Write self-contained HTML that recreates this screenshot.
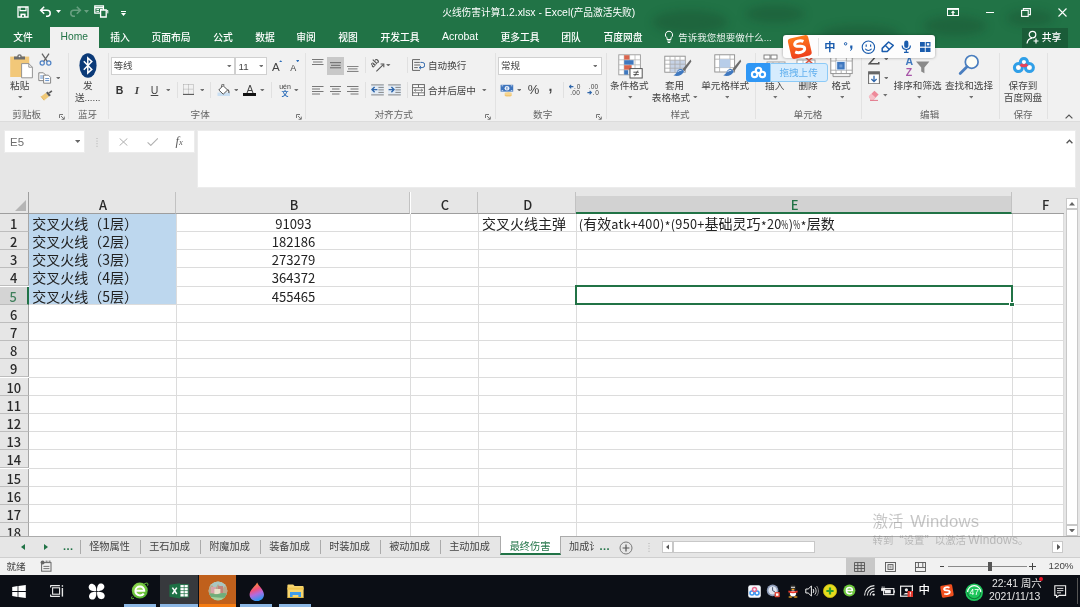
<!DOCTYPE html>
<html lang="zh-CN">
<head>
<meta charset="utf-8">
<title>火线伤害计算1.2.xlsx - Excel</title>
<style>
*{box-sizing:border-box;margin:0;padding:0}
html,body{width:1080px;height:607px;overflow:hidden;background:#e6e6e6}
body{position:relative;will-change:transform;font-family:"Liberation Sans","Noto Sans CJK SC",sans-serif;font-size:10.5px;color:#444}
.abs{position:absolute}
svg.abs{z-index:2}
#titlebar{position:absolute;left:0;top:0;width:1080px;height:47.5px;background:#217346}
#title{position:absolute;left:0;width:1077.5px;top:6px;text-align:center;color:#fff;font-size:9.7px;line-height:14px}
.mtab{position:absolute;top:29.5px;color:#fff;font-weight:500;font-size:9.8px;line-height:15px;white-space:nowrap;transform:translateX(-50%)}
.tl{font-size:10.4px}
#hometab{position:absolute;left:50px;top:27px;width:48.5px;height:21px;background:#f1f1f1;color:#217346;text-align:center;font-size:10.3px;line-height:20px}
#ribbon{position:absolute;left:0;top:47.5px;width:1080px;height:74.5px;background:#f1f1f1;border-bottom:1px solid #dcdcdc}
.rt{position:absolute;white-space:nowrap;font-size:9.6px;line-height:14px;color:#444}
.rc{transform:translateX(-50%);text-align:center}
.gl{position:absolute;top:53px;width:1px;height:66px;background:#e2e2e2}
.glabel{position:absolute;top:107.9px;font-size:9.6px;line-height:14px;color:#666;transform:translateX(-50%);white-space:nowrap}
#fbar{position:absolute;left:0;top:122.5px;width:1080px;height:73px;background:#e6e6e6}
.wbox{position:absolute;background:#fff;border:1px solid #d0d0d0}
#grid{position:absolute;left:0;top:192px;width:1063.5px;height:344px;background:#fff;overflow:hidden}
.ch{position:absolute;top:0;background:#e6e6e6;text-align:center;font-family:"Noto Sans CJK SC",sans-serif;font-weight:500;font-size:12.9px;line-height:17.4px;color:#2a2a2a;border-right:1px solid #c2c2c2;border-bottom:1px solid #9e9e9e;padding-left:2px;padding-top:3.5px}
.rh{position:absolute;left:0;width:28.5px;height:18.2px;background:#e6e6e6;text-align:center;font-family:"Noto Sans CJK SC",sans-serif;font-weight:500;font-size:12.9px;line-height:19.2px;color:#2a2a2a;border-bottom:1px solid #bdbdbd;border-right:1px solid #a6a6a6;overflow:hidden}
.vl{position:absolute;top:21.7px;width:1px;height:330px;background:#dcdcdc}
.hl{position:absolute;left:28.5px;width:1040px;height:1px;background:#dcdcdc}
.num{font-size:13.1px !important;line-height:20.2px !important}
#fx s{text-decoration:none;font-size:12.7px;letter-spacing:0.24px}
#fx i{font-style:normal;font-size:12px;position:relative;top:2.6px;margin:0 0.4px}
#fx u{text-decoration:none;display:inline-block;font-size:12.4px;transform:scaleX(0.6);margin:0 -2.1px}
.cell{position:absolute;height:18.2px;line-height:18.6px;font-size:14px;color:#222;white-space:nowrap;font-family:"Noto Sans CJK SC","Liberation Sans",sans-serif;font-weight:400;overflow:visible}
#tabs{position:absolute;left:0;top:535.7px;width:1080px;height:22.6px;background:#e6e6e6;border-top:1px solid #ababab;border-bottom:1px solid #cfcfcf}
.st{position:absolute;top:0;height:21px;font-size:10.2px;line-height:19px;color:#444;white-space:nowrap;transform:translateX(-50%)}
.sd{position:absolute;top:3px;width:1px;height:14px;background:#ababab}
#status{position:absolute;left:0;top:558.3px;width:1080px;height:17.5px;background:#f1f1f1}
#taskbar{position:absolute;left:0;top:575.4px;width:1080px;height:31.6px;background:#0b0e15}
</style>
</head>
<body>
<div id="titlebar"></div>
<svg class="abs" style="left:560px;top:0;z-index:0" width="520" height="47" viewBox="0 0 520 47"><defs><filter id="bl" x="-20%" y="-50%" width="140%" height="200%"><feGaussianBlur stdDeviation="5"/></filter></defs><g filter="url(#bl)" fill="#123f27" opacity="0.28"><ellipse cx="130" cy="22" rx="38" ry="12"/><ellipse cx="215" cy="14" rx="30" ry="9"/><ellipse cx="300" cy="34" rx="40" ry="9"/><ellipse cx="395" cy="26" rx="32" ry="10"/><ellipse cx="470" cy="18" rx="24" ry="8"/></g></svg>
<div id="title">火线伤害计算<span class="tl">1.2.xlsx - Excel(</span>产品激活失败<span class="tl">)</span></div>
<div class="mtab" style="left:23px">文件</div>
<div class="mtab" style="left:120px">插入</div>
<div class="mtab" style="left:171px">页面布局</div>
<div class="mtab" style="left:223px">公式</div>
<div class="mtab" style="left:265px">数据</div>
<div class="mtab" style="left:306px">审阅</div>
<div class="mtab" style="left:348px">视图</div>
<div class="mtab" style="left:400px">开发工具</div>
<div class="mtab" style="left:460px;font-size:10.5px;top:29px">Acrobat</div>
<div class="mtab" style="left:520px">更多工具</div>
<div class="mtab" style="left:571px">团队</div>
<div class="mtab" style="left:623px">百度网盘</div>
<div class="mtab" style="transform:none;left:678.3px;color:rgba(255,255,255,0.9);font-size:9.5px;font-weight:400">告诉我您想要做什么...</div>
<svg class="abs" style="left:663px;top:30px" width="12" height="14" viewBox="0 0 12 14"><path d="M6 1.2a3.6 3.6 0 0 0-2 6.6v1.7h4V7.8a3.6 3.6 0 0 0-2-6.6z" fill="none" stroke="#fff" stroke-width="1"/><path d="M4.3 11h3.4M4.8 12.5h2.4" stroke="#fff" stroke-width="1"/></svg>
<div class="abs" style="left:1021.5px;top:28px;width:46px;height:19.5px;background:#1a5c38"></div>
<svg class="abs" style="left:1026px;top:30px" width="14" height="15" viewBox="0 0 14 15"><circle cx="6.5" cy="4.6" r="3.3" fill="none" stroke="#fff" stroke-width="1.2"/><path d="M1 13.5c0.4-3 2.4-5 5-5.4" fill="none" stroke="#fff" stroke-width="1.2"/><path d="M10 8.5v5M7.5 11h5" stroke="#fff" stroke-width="1.2"/></svg>
<div class="mtab" style="left:1051.5px">共享</div>
<svg class="abs" style="left:17px;top:5.5px" width="12" height="12" viewBox="0 0 12 12"><path d="M1 1h10v10H1z" fill="none" stroke="#fff" stroke-width="1.3"/><path d="M3 1v3.6h6V1" fill="none" stroke="#fff" stroke-width="1.2"/><rect x="3.4" y="7.6" width="5.2" height="3.4" fill="#fff"/><rect x="5.2" y="9" width="1.6" height="2" fill="#217346"/></svg>
<svg class="abs" style="left:39px;top:6px" width="14" height="11" viewBox="0 0 14 11"><path d="M5.2 0.8 1.6 4.3l3.6 3.5M1.8 4.3h6.4a3 3 0 0 1 0 6H7" fill="none" stroke="#fff" stroke-width="1.5"/></svg>
<svg class="abs" style="left:55.5px;top:10px" width="5" height="3" viewBox="0 0 5 3"><path d="M0 0h5L2.5 3z" fill="#fff"/></svg>
<svg class="abs" style="left:68px;top:6px" width="14" height="11" viewBox="0 0 14 11" opacity="0.32"><path d="M8.8 0.8l3.6 3.5-3.6 3.5M12.2 4.3H5.8a3 3 0 0 0 0 6H7" fill="none" stroke="#fff" stroke-width="1.5"/></svg>
<svg class="abs" style="left:83.5px;top:10px" width="5" height="3" viewBox="0 0 5 3" opacity="0.32"><path d="M0 0h5L2.5 3z" fill="#fff"/></svg>
<svg class="abs" style="left:94px;top:5px" width="15" height="13" viewBox="0 0 15 13"><path d="M0.8 0.8h8.6v7.4H0.8z" fill="none" stroke="#fff" stroke-width="1.3"/><path d="M0.8 2.6h8.6" stroke="#fff" stroke-width="1.6"/><path d="M2.4 4.6h2.6M2.4 6.4h2.6M6 4.6h2" stroke="#fff" stroke-width="1"/><path d="M6.6 5h5.6v7H6.6z" fill="#217346" stroke="#fff" stroke-width="1.3"/><path d="M12.2 6.2l1.6-0.8v3" fill="none" stroke="#fff" stroke-width="1"/></svg>
<svg class="abs" style="left:121px;top:10.5px" width="5" height="5" viewBox="0 0 5 5"><path d="M0 0.5h5" stroke="#fff" stroke-width="1"/><path d="M0 2h5L2.5 5z" fill="#fff"/></svg>
<svg class="abs" style="left:946.5px;top:8px" width="12" height="8" viewBox="0 0 12 8"><rect x="0.5" y="0.5" width="11" height="7" fill="none" stroke="#fff" stroke-width="1"/><path d="M0.5 1.2h11" stroke="#fff" stroke-width="1.4"/><path d="M6 2.4 3.8 4.8h1.5V7h1.4V4.8h1.5z" fill="#fff"/></svg>
<div class="abs" style="left:985.5px;top:11.5px;width:8px;height:1.2px;background:#fff"></div>
<svg class="abs" style="left:1021px;top:7.5px" width="10" height="9" viewBox="0 0 10 9"><rect x="0.6" y="2.4" width="6.6" height="6" fill="none" stroke="#fff" stroke-width="1.1"/><path d="M2.4 2.4V0.6h7v6H7.4" fill="none" stroke="#fff" stroke-width="1.1"/></svg>
<svg class="abs" style="left:1057.5px;top:7.5px" width="9" height="9" viewBox="0 0 9 9"><path d="M0.5 0.5l8 8M8.5 0.5l-8 8" stroke="#fff" stroke-width="1.1"/></svg>
<div id="hometab">Home</div>
<div id="ribbon"></div>
<div class="gl" style="left:68px"></div>
<div class="gl" style="left:107.5px"></div>
<div class="gl" style="left:305.3px"></div>
<div class="gl" style="left:494.5px"></div>
<div class="gl" style="left:606px"></div>
<div class="gl" style="left:755px"></div>
<div class="gl" style="left:861.3px"></div>
<div class="gl" style="left:999px"></div>
<div class="gl" style="left:1047.4px"></div>
<div class="abs" style="left:176.5px;top:82px;width:1px;height:16px;background:#e0e0e0"></div>
<div class="abs" style="left:210px;top:82px;width:1px;height:16px;background:#e0e0e0"></div>
<div class="abs" style="left:271px;top:82px;width:1px;height:16px;background:#e0e0e0"></div>
<div class="abs" style="left:365px;top:57px;width:1px;height:16px;background:#e0e0e0"></div>
<div class="abs" style="left:365px;top:82px;width:1px;height:16px;background:#e0e0e0"></div>
<div class="abs" style="left:406.5px;top:57px;width:1px;height:16px;background:#e0e0e0"></div>
<div class="abs" style="left:406.5px;top:82px;width:1px;height:16px;background:#e0e0e0"></div>
<div class="abs" style="left:563px;top:82px;width:1px;height:16px;background:#e0e0e0"></div>
<div class="glabel" style="left:26.7px">剪贴板</div>
<div class="glabel" style="left:87.5px">蓝牙</div>
<div class="glabel" style="left:200.2px">字体</div>
<div class="glabel" style="left:393.7px">对齐方式</div>
<div class="glabel" style="left:542.7px">数字</div>
<div class="glabel" style="left:680px">样式</div>
<div class="glabel" style="left:808px">单元格</div>
<div class="glabel" style="left:929.7px">编辑</div>
<div class="glabel" style="left:1023px">保存</div>
<svg class="abs" style="left:58.5px;top:114px" width="6" height="6" viewBox="0 0 6 6"><path d="M0.5 4V0.5H4" fill="none" stroke="#777" stroke-width="1"/><path d="M2 2l3 3M5.3 2.6v2.7H2.6" fill="none" stroke="#777" stroke-width="1"/></svg>
<svg class="abs" style="left:296px;top:114px" width="6" height="6" viewBox="0 0 6 6"><path d="M0.5 4V0.5H4" fill="none" stroke="#777" stroke-width="1"/><path d="M2 2l3 3M5.3 2.6v2.7H2.6" fill="none" stroke="#777" stroke-width="1"/></svg>
<svg class="abs" style="left:485px;top:114px" width="6" height="6" viewBox="0 0 6 6"><path d="M0.5 4V0.5H4" fill="none" stroke="#777" stroke-width="1"/><path d="M2 2l3 3M5.3 2.6v2.7H2.6" fill="none" stroke="#777" stroke-width="1"/></svg>
<svg class="abs" style="left:596px;top:114px" width="6" height="6" viewBox="0 0 6 6"><path d="M0.5 4V0.5H4" fill="none" stroke="#777" stroke-width="1"/><path d="M2 2l3 3M5.3 2.6v2.7H2.6" fill="none" stroke="#777" stroke-width="1"/></svg>
<div class="rt rc" style="left:19.7px;top:78.7px;">粘贴</div>
<div class="rt rc" style="left:87.7px;top:79px;">发</div>
<div class="rt rc" style="left:87.7px;top:90.8px;">送......</div>
<div class="rt rc" style="left:629.3px;top:78.7px;">条件格式</div>
<div class="rt rc" style="left:674.5px;top:78.7px;">套用</div>
<div class="rt rc" style="left:671px;top:90.8px;">表格格式</div>
<div class="rt rc" style="left:725.2px;top:78.7px;">单元格样式</div>
<div class="rt rc" style="left:774.7px;top:78.7px;">插入</div>
<div class="rt rc" style="left:808px;top:78.7px;">删除</div>
<div class="rt rc" style="left:841px;top:78.7px;">格式</div>
<div class="rt rc" style="left:917.6px;top:78.7px;">排序和筛选</div>
<div class="rt rc" style="left:969px;top:78.7px;">查找和选择</div>
<div class="rt rc" style="left:1023px;top:78.7px;">保存到</div>
<div class="rt rc" style="left:1023px;top:90.8px;">百度网盘</div>
<div class="rt" style="left:428px;top:59px">自动换行</div>
<div class="rt" style="left:428px;top:83.5px">合并后居中</div>
<svg class="abs" style="left:18.0px;top:95.9px" width="4.6" height="2.6" viewBox="0 0 5 3"><path d="M0 0h5L2.5 3z" fill="#707070"/></svg>
<svg class="abs" style="left:55.5px;top:76.5px" width="4.6" height="2.6" viewBox="0 0 5 3"><path d="M0 0h5L2.5 3z" fill="#707070"/></svg>
<svg class="abs" style="left:227.0px;top:64.5px" width="4.6" height="2.6" viewBox="0 0 5 3"><path d="M0 0h5L2.5 3z" fill="#707070"/></svg>
<svg class="abs" style="left:258.5px;top:64.5px" width="4.6" height="2.6" viewBox="0 0 5 3"><path d="M0 0h5L2.5 3z" fill="#707070"/></svg>
<svg class="abs" style="left:165.5px;top:88.5px" width="4.6" height="2.6" viewBox="0 0 5 3"><path d="M0 0h5L2.5 3z" fill="#707070"/></svg>
<svg class="abs" style="left:199.5px;top:88.5px" width="4.6" height="2.6" viewBox="0 0 5 3"><path d="M0 0h5L2.5 3z" fill="#707070"/></svg>
<svg class="abs" style="left:233.5px;top:88.5px" width="4.6" height="2.6" viewBox="0 0 5 3"><path d="M0 0h5L2.5 3z" fill="#707070"/></svg>
<svg class="abs" style="left:260.0px;top:88.5px" width="4.6" height="2.6" viewBox="0 0 5 3"><path d="M0 0h5L2.5 3z" fill="#707070"/></svg>
<svg class="abs" style="left:294.0px;top:88.5px" width="4.6" height="2.6" viewBox="0 0 5 3"><path d="M0 0h5L2.5 3z" fill="#707070"/></svg>
<svg class="abs" style="left:386.0px;top:63.5px" width="4.6" height="2.6" viewBox="0 0 5 3"><path d="M0 0h5L2.5 3z" fill="#707070"/></svg>
<svg class="abs" style="left:482.0px;top:88.5px" width="4.6" height="2.6" viewBox="0 0 5 3"><path d="M0 0h5L2.5 3z" fill="#707070"/></svg>
<svg class="abs" style="left:592.5px;top:64.5px" width="4.6" height="2.6" viewBox="0 0 5 3"><path d="M0 0h5L2.5 3z" fill="#707070"/></svg>
<svg class="abs" style="left:516.5px;top:88.5px" width="4.6" height="2.6" viewBox="0 0 5 3"><path d="M0 0h5L2.5 3z" fill="#707070"/></svg>
<svg class="abs" style="left:628.2px;top:96.2px" width="4.6" height="2.6" viewBox="0 0 5 3"><path d="M0 0h5L2.5 3z" fill="#707070"/></svg>
<svg class="abs" style="left:693.3px;top:95.8px" width="4.6" height="2.6" viewBox="0 0 5 3"><path d="M0 0h5L2.5 3z" fill="#707070"/></svg>
<svg class="abs" style="left:724.7px;top:96.2px" width="4.6" height="2.6" viewBox="0 0 5 3"><path d="M0 0h5L2.5 3z" fill="#707070"/></svg>
<svg class="abs" style="left:773.4px;top:96.2px" width="4.6" height="2.6" viewBox="0 0 5 3"><path d="M0 0h5L2.5 3z" fill="#707070"/></svg>
<svg class="abs" style="left:806.7px;top:96.2px" width="4.6" height="2.6" viewBox="0 0 5 3"><path d="M0 0h5L2.5 3z" fill="#707070"/></svg>
<svg class="abs" style="left:839.9px;top:96.2px" width="4.6" height="2.6" viewBox="0 0 5 3"><path d="M0 0h5L2.5 3z" fill="#707070"/></svg>
<svg class="abs" style="left:883.5px;top:57.5px" width="4.6" height="2.6" viewBox="0 0 5 3"><path d="M0 0h5L2.5 3z" fill="#707070"/></svg>
<svg class="abs" style="left:883.5px;top:76.5px" width="4.6" height="2.6" viewBox="0 0 5 3"><path d="M0 0h5L2.5 3z" fill="#707070"/></svg>
<svg class="abs" style="left:883.0px;top:94.0px" width="4.6" height="2.6" viewBox="0 0 5 3"><path d="M0 0h5L2.5 3z" fill="#707070"/></svg>
<svg class="abs" style="left:917px;top:96.2px" width="4.6" height="2.6" viewBox="0 0 5 3"><path d="M0 0h5L2.5 3z" fill="#707070"/></svg>
<svg class="abs" style="left:968.9px;top:96.2px" width="4.6" height="2.6" viewBox="0 0 5 3"><path d="M0 0h5L2.5 3z" fill="#707070"/></svg>
<div class="wbox" style="left:111.2px;top:56.8px;width:124.3px;height:17.8px"></div>
<div class="wbox" style="left:234.7px;top:56.8px;width:32.2px;height:17.8px"></div>
<div class="wbox" style="left:498px;top:56.8px;width:103.6px;height:17.8px"></div>
<div class="rt" style="left:113.5px;top:59px">等线</div>
<div class="rt" style="left:238.5px;top:59.5px;font-size:9.8px">11</div>
<div class="rt" style="left:501px;top:59px">常规</div>
<div class="rt rc" style="left:119.5px;top:83px;font-weight:bold;font-size:10.5px;color:#333">B</div>
<div class="rt rc" style="left:137px;top:83px;font-style:italic;font-weight:bold;font-family:'Liberation Serif',serif;font-size:11px;color:#444">I</div>
<div class="rt rc" style="left:154.5px;top:83px;font-size:10.5px;text-decoration:underline;color:#444">U</div>
<div class="rt" style="left:272px;top:59.3px;font-size:11.6px;line-height:15px;color:#444">A</div>
<div class="rt" style="left:290.2px;top:61.7px;font-size:9px;line-height:13px;color:#444">A</div>
<svg class="abs" style="left:279.3px;top:60px" width="3.4" height="2.4" viewBox="0 0 5 3"><path d="M0 3h5L2.5 0z" fill="#2b6cb8"/></svg>
<svg class="abs" style="left:296px;top:60px" width="3.4" height="2.4" viewBox="0 0 4 3"><path d="M0 0h4L2 3z" fill="#2b6cb8"/></svg>
<div class="rt rc" style="left:533.5px;top:82px;font-size:13px;line-height:16px;color:#444">%</div>
<div class="rt rc" style="left:550.5px;top:78px;font-size:14px;line-height:16px;font-weight:bold;color:#444">,</div>
<svg class="abs" style="left:9px;top:53px" width="25" height="26" viewBox="0 0 25 26">
<rect x="1.2" y="3.6" width="19" height="20.4" fill="#f2c879"/>
<path d="M5 3.6V6.4h11V3.6h-3.2a2.3 2.3 0 0 0-4.6 0z" fill="#6d6d6d"/>
<circle cx="10.5" cy="3.3" r="0.9" fill="#f1f1f1"/>
<path d="M12.6 10.6h7.2l3.6 3.6v10.6H12.6z" fill="#fff" stroke="#8a8a8a" stroke-width="0.9"/>
<path d="M19.8 10.6v3.6h3.6" fill="none" stroke="#8a8a8a" stroke-width="0.9"/>
</svg>
<svg class="abs" style="left:39px;top:52.5px" width="13" height="13" viewBox="0 0 13 13">
<path d="M3 0.6l5.4 8M10 0.6l-5.4 8" stroke="#666" stroke-width="1.3" fill="none"/>
<circle cx="3.2" cy="10" r="2.1" fill="none" stroke="#4f82c4" stroke-width="1.2"/>
<circle cx="9.8" cy="10" r="2.1" fill="none" stroke="#4f82c4" stroke-width="1.2"/>
</svg>
<svg class="abs" style="left:38px;top:71.5px" width="14" height="12" viewBox="0 0 14 12">
<path d="M0.8 0.8h4.6l1.8 1.8v6H0.8z" fill="#fff" stroke="#7a7a7a" stroke-width="0.9"/>
<path d="M2.2 4h3M2.2 6h3" stroke="#4f82c4" stroke-width="0.9"/>
<path d="M5.6 3.2h4.8l2.2 2.2v5.8h-7z" fill="#fff" stroke="#7a7a7a" stroke-width="0.9"/>
<path d="M7.2 6.6h4M7.2 8.6h4" stroke="#4f82c4" stroke-width="0.9"/>
</svg>
<svg class="abs" style="left:39.5px;top:89px" width="13" height="13" viewBox="0 0 13 13">
<path d="M1 7.4l5-3.6 3 3.8-5 3.8z" fill="#f0c978"/>
<path d="M6 3.8l1.8-1.3 3 3.8L9 7.6z" fill="#5a5a5a"/>
<path d="M8.8 3.2l2.6-2 1 1.3-2.6 2z" fill="#5a5a5a"/>
<path d="M1 7.400000000000001l3 3.8" stroke="#e0b25a" stroke-width="0.8"/>
</svg>
<svg class="abs" style="left:78.5px;top:52.5px" width="18" height="25" viewBox="0 0 18 25">
<ellipse cx="9" cy="12.5" rx="8.6" ry="12.2" fill="#0b3a78"/>
<path d="M4.8 8.2l8 8.2-4 3.6V5l4 3.6-8 8.2" fill="none" stroke="#fff" stroke-width="1.5" stroke-linejoin="miter"/>
</svg>
<svg class="abs" style="left:183px;top:84px" width="11" height="11" viewBox="0 0 11 11">
<path d="M0.5 0.5h10M0.5 5.2h10M0.5 0.5v10M5.5 0.5v10M10.5 0.5v10" stroke="#9a9a9a" stroke-width="0.8" stroke-dasharray="1 1" fill="none"/>
<path d="M0 10.4h11" stroke="#555" stroke-width="1.1"/>
</svg>
<svg class="abs" style="left:216.5px;top:83.5px" width="14" height="13" viewBox="0 0 14 13">
<rect x="0.5" y="8.6" width="12.5" height="3.4" fill="#c9dff3"/>
<path d="M6 1.6l4.6 4.4-4.4 4.2L1.8 6z" fill="#fff" stroke="#555" stroke-width="1"/>
<path d="M4.6 3.2V1.4a1.3 1.3 0 0 1 2.6 0" fill="none" stroke="#555" stroke-width="0.9"/>
<path d="M10.6 5.4c1.4 1.2 1.6 2.6 1.3 3.8" fill="none" stroke="#555" stroke-width="1.2"/>
</svg>
<div class="rt rc" style="left:250px;top:82.5px;font-size:10.5px;line-height:12px;color:#444">A</div>
<div class="abs" style="left:243px;top:93.3px;width:13px;height:3px;background:#111"></div>
<svg class="abs" style="left:276.5px;top:83px" width="16" height="14" viewBox="0 0 16 14"><text x="8" y="5.6" text-anchor="middle" font-family="Liberation Sans, sans-serif" font-size="7" fill="#444">uén</text><text x="8" y="12.6" text-anchor="middle" font-family="Noto Sans CJK SC, sans-serif" font-size="7" font-weight="bold" fill="#2b6cb8">文</text></svg>
<div class="abs" style="left:326.7px;top:57.1px;width:17.2px;height:17.7px;background:#c8c8c8"></div>
<svg class="abs" style="left:312px;top:59px" width="11.5" height="12" viewBox="0 0 11.5 12"><path d="M0 0.5h11.5M1 3h9.5M0 5.5h11.5" stroke="#6a6a6a" stroke-width="0.9" fill="none"/></svg>
<svg class="abs" style="left:329.5px;top:62px" width="11.5" height="12" viewBox="0 0 11.5 12"><path d="M0 0.7h11.5M1 3.3h9.5M0 5.8h11.5" stroke="#5a5a5a" stroke-width="0.9" fill="none"/></svg>
<svg class="abs" style="left:347px;top:66px" width="11.5" height="12" viewBox="0 0 11.5 12"><path d="M0 0.4h11.5M1 2.9h9.5M0 5.4h11.5" stroke="#6a6a6a" stroke-width="0.9" fill="none"/></svg>
<svg class="abs" style="left:312px;top:86px" width="11.5" height="12" viewBox="0 0 11.5 12"><path d="M0 0.5h11.5M0 3h8M0 5.5h11.5M0 8h8" stroke="#6a6a6a" stroke-width="0.9" fill="none"/></svg>
<svg class="abs" style="left:329.5px;top:86px" width="11.5" height="12" viewBox="0 0 11.5 12"><path d="M0 0.5h11.5M2 3h7.5M0 5.5h11.5M2 8h7.5" stroke="#6a6a6a" stroke-width="0.9" fill="none"/></svg>
<svg class="abs" style="left:347px;top:86px" width="11.5" height="12" viewBox="0 0 11.5 12"><path d="M0 0.5h11.5M3.5 3h8M0 5.5h11.5M3.5 8h8" stroke="#6a6a6a" stroke-width="0.9" fill="none"/></svg>
<svg class="abs" style="left:370.5px;top:58.5px" width="14" height="14" viewBox="0 0 14 14">
<path d="M5.4 12.4 12.2 5.6" stroke="#555" stroke-width="1.1" fill="none"/>
<path d="M9.6 5h3.2v3.2" stroke="#555" stroke-width="1.1" fill="none"/>
<text x="0" y="0" transform="translate(2 9) rotate(-45)" font-family="Liberation Sans, sans-serif" font-size="8.4" font-weight="bold" fill="#555">ab</text>
</svg>
<svg class="abs" style="left:370.5px;top:83.5px" width="13" height="12" viewBox="0 0 13 12">
<rect x="0" y="0.3" width="13" height="11" fill="#dbe8f6" opacity="0.7"/>
<path d="M0.2 0.9h12.6M0.2 10.9h12.6M7.4 3.4h5.4M7.4 5.9h5.4M7.4 8.4h5.4" stroke="#7a7a7a" stroke-width="0.9" fill="none"/>
<path d="M1 5.6h5.4M3.6 3 1 5.6l2.6 2.6" stroke="#2f66aa" stroke-width="1.4" fill="none"/>
</svg>
<svg class="abs" style="left:388px;top:83.5px" width="13" height="12" viewBox="0 0 13 12">
<rect x="0" y="0.3" width="13" height="11" fill="#dbe8f6" opacity="0.7"/>
<path d="M0.2 0.9h12.6M0.2 10.9h12.6M7.4 3.4h5.4M7.4 5.9h5.4M7.4 8.4h5.4" stroke="#7a7a7a" stroke-width="0.9" fill="none"/>
<path d="M0.6 5.6h5.4M3.4 3 6 5.6 3.4 8.2" stroke="#2f66aa" stroke-width="1.4" fill="none"/>
</svg>
<svg class="abs" style="left:412px;top:59px" width="13" height="12" viewBox="0 0 13 12">
<path d="M0.5 0.6h7.5M0.5 11.4h7.5M0.5 0.6v10.8" stroke="#666" stroke-width="1" fill="none"/>
<path d="M2.2 3.4h5.6M2.2 6h6M2.2 8.6h3.6" stroke="#666" stroke-width="1" fill="none"/>
<path d="M8.4 3.4h1.8a1.6 1.6 0 0 1 0 5.2H7.6" stroke="#2f66aa" stroke-width="1" fill="none"/>
<path d="M9 7l-1.8 1.6L9 10.2" stroke="#2f66aa" stroke-width="1" fill="none"/>
</svg>
<svg class="abs" style="left:412px;top:83.5px" width="13" height="12.5" viewBox="0 0 13 12.5">
<rect x="0.6" y="0.6" width="11.8" height="11.2" fill="#fff" stroke="#666" stroke-width="1"/>
<path d="M0.6 3.6h11.8M0.6 8.8h11.8M6.5 0.6v3M6.5 8.8v3" stroke="#666" stroke-width="0.9" fill="none"/>
<path d="M2.4 6.2h8.2M3.8 5 2.4 6.2l1.4 1.2M9.2 5l1.4 1.2-1.4 1.2" stroke="#555" stroke-width="0.8" fill="none"/>
</svg>
<svg class="abs" style="left:499.5px;top:83.5px" width="14" height="13" viewBox="0 0 14 13">
<ellipse cx="8.2" cy="11" rx="3.6" ry="1.5" fill="#f1c673"/>
<ellipse cx="8.2" cy="9.6" rx="3.6" ry="1.5" fill="#f6d590"/>
<rect x="0.6" y="0.8" width="12.6" height="6.8" fill="#3e74bd"/>
<ellipse cx="7" cy="4.2" rx="2.4" ry="2.2" fill="#e9f0fa"/>
<path d="M1.6 1.8h1.6M10.8 1.8h1.6M1.6 6.6h1.6M10.8 6.6h1.6" stroke="#e9f0fa" stroke-width="0.8"/>
<path d="M6.9 3v2.6" stroke="#3e74bd" stroke-width="0.9"/>
</svg>
<svg class="abs" style="left:569px;top:84px" width="12" height="12" viewBox="0 0 12 12">
<path d="M0.4 2.6h4M2.2 0.8 0.4 2.6l1.8 1.8" stroke="#2f66aa" stroke-width="1.1" fill="none"/>
<text x="5" y="5.2" font-family="Liberation Sans, sans-serif" font-size="6.5" fill="#444" textLength="6.4">.0</text>
<text x="1.2" y="11.2" font-family="Liberation Sans, sans-serif" font-size="6.5" fill="#444" textLength="9.6">.00</text>
</svg>
<svg class="abs" style="left:586.5px;top:84px" width="12" height="12" viewBox="0 0 12 12">
<text x="1.6" y="5.2" font-family="Liberation Sans, sans-serif" font-size="6.5" fill="#444" textLength="9.6">.00</text>
<path d="M0.4 8.6h4M2.6 6.8l1.8 1.8-1.8 1.8" stroke="#2f66aa" stroke-width="1.1" fill="none"/>
<text x="5.4" y="11.2" font-family="Liberation Sans, sans-serif" font-size="6.5" fill="#444" textLength="6.4">.0</text>
</svg>
<svg class="abs" style="left:617.5px;top:53.5px" width="25" height="25" viewBox="0 0 25 25">
<rect x="0.8" y="0.8" width="21.6" height="20" fill="#fff" stroke="#9a9a9a" stroke-width="0.9"/>
<path d="M0.8 5.8h21.6M0.8 10.8h21.6M0.8 15.8h21.6M6.2 0.8v20M11.6 0.8v20M17 0.8v20" stroke="#b5b5b5" stroke-width="0.8" fill="none"/>
<rect x="6.2" y="1.2" width="5.2" height="4.4" fill="#d9644c"/>
<rect x="6.2" y="6.2" width="9.4" height="4.4" fill="#3f78bf"/>
<rect x="6.2" y="11.2" width="7.4" height="4.4" fill="#d9644c"/>
<rect x="6.2" y="16.2" width="4" height="4.4" fill="#3f78bf"/>
<rect x="12" y="14.6" width="12.2" height="9.4" fill="#fff" stroke="#555" stroke-width="1"/>
<path d="M15.4 18.2h5.4M15.4 20.6h5.4M19.8 16.6l-3.2 5.6" stroke="#444" stroke-width="0.9" fill="none"/>
</svg>
<svg class="abs" style="left:664px;top:55px" width="28" height="24" viewBox="0 0 28 24">
<rect x="0.8" y="1.2" width="20.4" height="16" fill="#fff" stroke="#8c8c8c" stroke-width="0.9"/>
<rect x="6" y="5.2" width="15" height="12" fill="#c7d3e6"/>
<path d="M0.8 5.2h20.4M0.8 9.2h20.4M0.8 13.2h20.4M6 1.2v16M11 1.2v16M16 1.2v16" stroke="#a9a9a9" stroke-width="0.8" fill="none"/>
<path d="M26.6 4.400000000000002 L18.4 14.6 l2 1.6 L27.4 6.6z" fill="#6b6b6b"/>
<path d="M18.2 14.4c-2.4-1-4.600000000000001 0.3999999999999986-5.399999999999999 2.6-0.6 1.6-1.8 2.8-3.4 3.2 3.6 1.6 9.2 0.4 10.6-4z" fill="#3f78bf"/>
<path d="M13.4 17.2c1-1.4 2.4-2 4-1.6" stroke="#dfe9f6" stroke-width="1" fill="none"/>
</svg>
<svg class="abs" style="left:714px;top:53.5px" width="28" height="25" viewBox="0 0 28 25">
<rect x="0.8" y="0.8" width="19.8" height="17.2" fill="#fff" stroke="#8c8c8c" stroke-width="0.9"/>
<path d="M0.8 5.2h19.8M0.8 13.6h19.8M5.6 0.8v17.2M16 0.8v17.2" stroke="#a9a9a9" stroke-width="0.8" fill="none"/>
<rect x="5.6" y="5.2" width="10.4" height="8.4" fill="#b7cde9"/>
<path d="M26.4 5.4 L18.2 15.6 l2 1.6 L27.2 7.6z" fill="#6b6b6b"/>
<path d="M18 15.4c-2.4-1-4.6 0.4-5.4 2.6-0.6 1.6-1.8 2.8-3.4 3.2 3.6 1.6 9.2 0.4 10.6-4z" fill="#3f78bf"/>
<path d="M13.2 18.2c1-1.4 2.4-2 4-1.6" stroke="#dfe9f6" stroke-width="1" fill="none"/>
</svg>
<svg class="abs" style="left:763px;top:53.5px" width="24" height="24" viewBox="0 0 24 24">
<rect x="1" y="1" width="6" height="4" fill="#fff" stroke="#777" stroke-width="0.9"/><rect x="8" y="1" width="6" height="4" fill="#fff" stroke="#777" stroke-width="0.9"/>
<rect x="4" y="8" width="18" height="14" fill="#fff" stroke="#999" stroke-width="0.9"/>
<path d="M4 12.600000000000001h18M4 17.2h18M10 8v14M16 8v14" stroke="#aaa" stroke-width="0.8"/>
</svg>
<svg class="abs" style="left:796px;top:53.5px" width="24" height="24" viewBox="0 0 24 24">
<rect x="1" y="6" width="18" height="14" fill="#fff" stroke="#999" stroke-width="0.9"/>
<path d="M1 10.6h18M1 15.2h18M7 6v14M13 6v14" stroke="#aaa" stroke-width="0.8"/>
<path d="M8.5 2.5l9 8M17.5 2.5l-9 8" stroke="#d9533f" stroke-width="1.6"/>
</svg>
<svg class="abs" style="left:830px;top:53.5px" width="23" height="24" viewBox="0 0 23 24">
<rect x="0.8" y="1" width="21.4" height="18.6" fill="#fff" stroke="#8c8c8c" stroke-width="0.9"/>
<path d="M0.8 7h21.4M0.8 16.2h21.4M6 1v18.6M16.4 1v18.6M11.2 16.2v3.4" stroke="#9a9a9a" stroke-width="0.8" fill="none"/>
<rect x="6" y="7" width="10.4" height="9.2" fill="#dbe6f4"/>
<rect x="7.2" y="8" width="7.4" height="7.4" fill="#3f78bf"/>
<rect x="9.4" y="10.4" width="3" height="3" fill="#6f9bd4"/>
<path d="M3 19.6v3h17v-3" stroke="#8c8c8c" stroke-width="0.9" fill="none"/>
</svg>
<svg class="abs" style="left:867.5px;top:52px" width="12" height="13" viewBox="0 0 12 13"><path d="M10.6 2.6V0.8H1.2l5 5.4-5 5.6h9.6V10" fill="none" stroke="#555" stroke-width="1.5"/></svg>
<svg class="abs" style="left:867.5px;top:70.5px" width="12" height="13.5" viewBox="0 0 12 13.5">
<rect x="0.6" y="0.8" width="10.8" height="12" fill="#fff" stroke="#666" stroke-width="1"/>
<rect x="0.6" y="0.8" width="10.8" height="2.6" fill="#666"/>
<path d="M6 4.8v5.6M3.4 8l2.6 2.6L8.6 8" stroke="#2f66aa" stroke-width="1.3" fill="none"/>
</svg>
<svg class="abs" style="left:868px;top:89.5px" width="12" height="11" viewBox="0 0 12 11">
<path d="M0.8 6.6l5.6-5.8 4.2 3.6-5.4 5.8H2.8z" fill="#ee8a9a"/>
<path d="M0.8 6.6l2.6-2.8 4.2 3.8-2.4 2.600000000000001H2.8z" fill="#f6c1c9"/>
<path d="M2 10.4h8" stroke="#e06a7e" stroke-width="0.9"/>
</svg>
<svg class="abs" style="left:905px;top:55.5px" width="26" height="22" viewBox="0 0 26 22">
<text x="0.4" y="9.2" font-family="Liberation Sans, sans-serif" font-size="10.5" font-weight="bold" fill="#3f78bf">A</text>
<text x="0.8" y="20.4" font-family="Liberation Sans, sans-serif" font-size="10.5" font-weight="bold" fill="#a855a8">Z</text>
<path d="M11 5.6h13.4l-5 6v5.6l-3.2-1.600000000000001v-4z" fill="#8a8a8a"/>
</svg>
<svg class="abs" style="left:957px;top:53px" width="24" height="24" viewBox="0 0 24 24">
<circle cx="14.7" cy="8.9" r="6.4" fill="#fdfdf5" stroke="#4a7ebf" stroke-width="1.7"/>
<path d="M10 13.8 3.2 20.6" stroke="#4a7ebf" stroke-width="2.8" stroke-linecap="round"/>
</svg>
<svg class="abs" style="left:1011.5px;top:55.5px" width="24" height="18" viewBox="0 0 24 18">
<circle cx="6.4" cy="11.6" r="4" fill="none" stroke="#2f9fe8" stroke-width="3"/>
<circle cx="17.4" cy="11.6" r="4" fill="none" stroke="#2f9fe8" stroke-width="3"/>
<circle cx="11.9" cy="6" r="3.6" fill="none" stroke="#2f9fe8" stroke-width="3"/>
<path d="M8.6 8.2a4.2 4.2 0 0 0 6.6 0" fill="none" stroke="#e8435a" stroke-width="3"/>
<circle cx="11.9" cy="6" r="1.6" fill="#fff"/><circle cx="6.4" cy="11.6" r="1.8" fill="#fff"/><circle cx="17.4" cy="11.6" r="1.8" fill="#fff"/>
</svg>
<svg class="abs" style="left:1064.5px;top:113.5px" width="8" height="5" viewBox="0 0 8 5"><path d="M0.6 4.4 4 1l3.4 3.4" fill="none" stroke="#555" stroke-width="1.2"/></svg>
<div id="overlays" style="position:absolute;left:0;top:0;width:0;height:0;z-index:10">
<div class="abs" style="left:746px;top:62.8px;width:24px;height:19px;background:#2f97f5;border-radius:3px 0 0 3px"></div>
<svg class="abs" style="left:749.5px;top:65.5px" width="17" height="13" viewBox="0 0 17 13">
<circle cx="4.6" cy="8.4" r="2.7" fill="none" stroke="#fff" stroke-width="2.1"/>
<circle cx="12.4" cy="8.4" r="2.7" fill="none" stroke="#fff" stroke-width="2.1"/>
<circle cx="8.5" cy="4.4" r="2.7" fill="none" stroke="#fff" stroke-width="2.1"/>
</svg>
<div class="abs" style="left:769.6px;top:62.8px;width:58px;height:19px;background:#d6ecfd;border:1px solid #8ccaf7;border-radius:0 3px 3px 0;color:#62b0ee;font-size:9.6px;line-height:17px;text-align:center;white-space:nowrap">拖拽上传</div>
<div class="abs" style="left:783.2px;top:35.2px;width:151.5px;height:23px;background:#fdfdfd;border-radius:3px;box-shadow:0 0 3px rgba(0,0,0,0.35)"></div>
<div class="abs" style="left:817.5px;top:37.5px;width:1px;height:18.5px;background:#e3e3e3"></div>
<svg class="abs" style="left:785px;top:33px" width="30" height="28" viewBox="0 0 30 28">
<defs><linearGradient id="sg" x1="0" y1="0" x2="0" y2="1"><stop offset="0" stop-color="#ff7a1a"/><stop offset="1" stop-color="#ee3f1c"/></linearGradient></defs>
<g transform="rotate(-13 14.8 14)"><rect x="4.4" y="3.6" width="20.8" height="20.8" rx="3" fill="url(#sg)"/>
<path d="M19.6 9.4c-1.6-1.2-3.6-1.7-5.600000000000001-1.5-2.4 0.2-3.8 1.4-3.6 3 0.2 1.4 1.6 1.9 4 2.3 2.8 0.4 4.6 1 4.8 2.8 0.2 1.8-1.4 3.2-4 3.4-2.2 0.2-4.4-0.4-6-1.6" fill="none" stroke="#fff" stroke-width="3"/></g>
</svg>
<div class="abs" style="left:824.2px;top:39.5px;font-size:11.2px;line-height:14px;font-weight:bold;color:#1a5cad">中</div>
<svg class="abs" style="left:843px;top:41px" width="11" height="12" viewBox="0 0 11 12"><circle cx="2.6" cy="2.8" r="1.2" fill="none" stroke="#1a5cad" stroke-width="1"/><path d="M7.2 4.4h2.2v2.2c0 1.800000000000001-0.8 2.8-2 3.4l-0.4-0.8c0.8-0.4 1.2-1 1.2-1.8h-1z" fill="#1a5cad"/></svg>
<svg class="abs" style="left:861px;top:39.5px" width="15" height="15" viewBox="0 0 15 15"><circle cx="7.4" cy="7.2" r="6.2" fill="none" stroke="#1a5cad" stroke-width="1.1"/><path d="M5.2 4.6v2.2M9.6 4.6v2.2" stroke="#1a5cad" stroke-width="1.2"/><path d="M4.2 8.8c1.6 2.2 4.800000000000001 2.2 6.4 0" fill="none" stroke="#1a5cad" stroke-width="1.1"/></svg>
<svg class="abs" style="left:881px;top:41px" width="13" height="12" viewBox="0 0 13 12"><path d="M7.6 1 1.2 7.4v3.2h5l6-6.2z" fill="none" stroke="#1a5cad" stroke-width="1.5" stroke-linejoin="round"/><path d="M4.4 4.4l4 4" stroke="#1a5cad" stroke-width="1.4"/></svg>
<svg class="abs" style="left:901px;top:40px" width="11" height="13" viewBox="0 0 11 13"><rect x="3.2" y="0.6" width="4.2" height="7.4" rx="2.1" fill="#1a5cad"/><path d="M1.2 5.6c0 5.2 8.2 5.2 8.2 0" fill="none" stroke="#1a5cad" stroke-width="1.2"/><path d="M5.300000000000001 9.6v2.6M3 12.3h4.6" stroke="#1a5cad" stroke-width="1.2"/></svg>
<svg class="abs" style="left:919.8px;top:41.8px" width="11" height="10.5" viewBox="0 0 11 10.5"><rect x="0" y="0" width="4.8" height="4.6" fill="#1a5cad"/><rect x="6.3" y="0.6" width="3.6" height="3.4" fill="none" stroke="#1a5cad" stroke-width="1.2"/><rect x="0" y="5.8" width="4.8" height="4.6" fill="#1a5cad"/><rect x="5.7" y="5.8" width="4.8" height="4.6" fill="#1a5cad"/></svg>
</div>
<div id="fbar"></div>
<div class="wbox" style="left:3.6px;top:130.2px;width:81.8px;height:23px;border-color:#ececec"></div>
<div class="abs" style="left:10px;top:134.6px;font-size:11.4px;line-height:15px;color:#6e6e6e;letter-spacing:0.2px">E5</div>
<svg class="abs" style="left:74.5px;top:139.8px" width="5.4" height="3" viewBox="0 0 5.4 3"><path d="M0 0h5.4L2.7 3z" fill="#666"/></svg>
<svg class="abs" style="left:96px;top:138px" width="2" height="9" viewBox="0 0 2 9"><path d="M1 0v9" stroke="#b0b0b0" stroke-width="1" stroke-dasharray="1 1.6"/></svg>
<div class="wbox" style="left:107.6px;top:130.2px;width:87.6px;height:23px;border-color:#ececec"></div>
<svg class="abs" style="left:119px;top:138.3px" width="9" height="8" viewBox="0 0 9 8"><path d="M0.6 0.4l7.8 7.2M8.4 0.4 0.6 7.6" stroke="#b0b0b0" stroke-width="1"/></svg>
<svg class="abs" style="left:146.5px;top:138.3px" width="11.5" height="8" viewBox="0 0 11.5 8"><path d="M0.6 4.4l3.2 3 7-7" fill="none" stroke="#b0b0b0" stroke-width="1.1"/></svg>
<div class="abs" style="left:175.5px;top:134px;font-family:'Liberation Serif',serif;font-style:italic;font-size:12.5px;line-height:15px;color:#5a5a5a">f<span style="font-size:8.5px">x</span></div>
<div class="wbox" style="left:197.3px;top:130.2px;width:878.9px;height:58px;border-color:#ececec"></div>
<svg class="abs" style="left:1065.8px;top:138.8px" width="7" height="5" viewBox="0 0 7 5"><path d="M0.6 4.2 3.5 1.2l2.9 3" fill="none" stroke="#555" stroke-width="1.3"/></svg>
<div id="grid">
<div class="ch" style="left:28.5px;width:147.9px;height:21.7px;">A</div>
<div class="ch" style="left:176.4px;width:234.1px;height:21.7px;">B</div>
<div class="ch" style="left:410.5px;width:67.8px;height:21.7px;">C</div>
<div class="ch" style="left:478.3px;width:98.0px;height:21.7px;">D</div>
<div class="ch" style="left:576.3px;width:435.7px;height:21.7px;background:linear-gradient(#e6e6e6 0,#e6e6e6 3.7px,#d2d2d2 3.7px);color:#217346;border-bottom:2px solid #217346;">E</div>
<div class="ch" style="left:1012px;width:51.5px;height:21.7px;text-align:left;padding-left:30px;border-right:none;">F</div>
<div class="abs" style="left:0;top:0;width:28.5px;height:21.7px;background:#e6e6e6;border-right:1px solid #9e9e9e;border-bottom:1px solid #9e9e9e"></div>
<svg class="abs" style="left:15px;top:8.2px" width="11" height="11" viewBox="0 0 11 11"><path d="M11 0v11H0z" fill="#b5b5b5"/></svg>
<div class="rh" style="top:21.7px;">1</div>
<div class="rh" style="top:39.9px;">2</div>
<div class="rh" style="top:58.1px;">3</div>
<div class="rh" style="top:76.3px;">4</div>
<div class="rh" style="top:94.5px;background:#d4d4d4;color:#3f7f5b;border-right:2px solid #217346;">5</div>
<div class="rh" style="top:112.7px;">6</div>
<div class="rh" style="top:130.9px;">7</div>
<div class="rh" style="top:149.1px;">8</div>
<div class="rh" style="top:167.3px;">9</div>
<div class="rh" style="top:185.5px;">10</div>
<div class="rh" style="top:203.7px;">11</div>
<div class="rh" style="top:221.9px;">12</div>
<div class="rh" style="top:240.1px;">13</div>
<div class="rh" style="top:258.3px;">14</div>
<div class="rh" style="top:276.5px;">15</div>
<div class="rh" style="top:294.7px;">16</div>
<div class="rh" style="top:312.9px;">17</div>
<div class="rh" style="top:331.1px;">18</div>
<div class="hl" style="top:38.9px"></div>
<div class="hl" style="top:57.1px"></div>
<div class="hl" style="top:75.3px"></div>
<div class="hl" style="top:93.5px"></div>
<div class="hl" style="top:111.7px"></div>
<div class="hl" style="top:129.9px"></div>
<div class="hl" style="top:148.1px"></div>
<div class="hl" style="top:166.3px"></div>
<div class="hl" style="top:184.5px"></div>
<div class="hl" style="top:202.7px"></div>
<div class="hl" style="top:220.9px"></div>
<div class="hl" style="top:239.1px"></div>
<div class="hl" style="top:257.3px"></div>
<div class="hl" style="top:275.5px"></div>
<div class="hl" style="top:293.7px"></div>
<div class="hl" style="top:311.9px"></div>
<div class="hl" style="top:330.1px"></div>
<div class="hl" style="top:348.3px"></div>
<div class="vl" style="left:175.9px"></div>
<div class="vl" style="left:410.0px"></div>
<div class="vl" style="left:477.8px"></div>
<div class="vl" style="left:575.8px"></div>
<div class="vl" style="left:1011.5px"></div>
<div class="vl" style="left:1063.0px"></div>
<div class="abs" style="left:28.5px;top:21.7px;width:147.9px;height:90.5px;background:#bdd7ee"></div>
<div class="cell" style="left:32.3px;top:21.7px">交叉火线（1层）</div>
<div class="cell num" style="left:176.4px;width:234.1px;top:21.7px;text-align:center">91093</div>
<div class="cell" style="left:32.3px;top:39.9px">交叉火线（2层）</div>
<div class="cell num" style="left:176.4px;width:234.1px;top:39.9px;text-align:center">182186</div>
<div class="cell" style="left:32.3px;top:58.1px">交叉火线（3层）</div>
<div class="cell num" style="left:176.4px;width:234.1px;top:58.1px;text-align:center">273279</div>
<div class="cell" style="left:32.3px;top:76.3px">交叉火线（4层）</div>
<div class="cell num" style="left:176.4px;width:234.1px;top:76.3px;text-align:center">364372</div>
<div class="cell" style="left:32.3px;top:94.5px">交叉火线（5层）</div>
<div class="cell num" style="left:176.4px;width:234.1px;top:94.5px;text-align:center">455465</div>
<div class="cell" style="left:482px;top:21.7px">交叉火线主弹</div>
<div class="cell" id="fx" style="left:578.8px;top:21.7px"><s>(</s>有效<s>atk+400)</s><i>*</i><s>(950+</s>基础灵巧<i>*</i><s>20</s><u>%</u><s>)</s><u>%</u><i>*</i>层数</div>
<div class="abs" style="left:575.3px;top:93.0px;width:437.9px;height:20.2px;border:2px solid #217346;background:#fff"></div>
<div class="abs" style="left:1009.3px;top:109.5px;width:5.4px;height:5.4px;background:#217346;border:1px solid #fff"></div>
</div>
<div class="abs" style="left:1066px;top:198px;width:11.5px;height:11px;background:#fff;border:1px solid #c8c8c8"></div>
<svg class="abs" style="left:1069px;top:202px" width="6" height="3.5" viewBox="0 0 6 3.5"><path d="M0 3.5h6L3 0z" fill="#666"/></svg>
<div class="abs" style="left:1066px;top:209px;width:11.5px;height:316px;background:#fff;border:1px solid #c8c8c8"></div>
<div class="abs" style="left:1066px;top:524.5px;width:11.5px;height:11px;background:#fff;border:1px solid #c8c8c8"></div>
<svg class="abs" style="left:1069px;top:528.5px" width="6" height="3.5" viewBox="0 0 6 3.5"><path d="M0 0h6L3 3.5z" fill="#666"/></svg>
<div id="tabs">
<svg class="abs" style="left:21px;top:7.5px" width="4" height="6" viewBox="0 0 4 6"><path d="M4 0v6L0 3z" fill="#217346"/></svg>
<svg class="abs" style="left:43.5px;top:7.5px" width="4" height="6" viewBox="0 0 4 6"><path d="M0 0v6L4 3z" fill="#217346"/></svg>
<div class="abs" style="left:63px;top:2px;font-size:11px;line-height:15px;color:#217346;font-weight:bold;letter-spacing:0.5px">...</div>
<div class="sd" style="left:79.5px"></div>
<div class="st" style="left:109.5px">怪物属性</div>
<div class="sd" style="left:139.5px"></div>
<div class="st" style="left:169.5px">王石加成</div>
<div class="sd" style="left:199.5px"></div>
<div class="st" style="left:229.5px">附魔加成</div>
<div class="sd" style="left:259.5px"></div>
<div class="st" style="left:289.5px">装备加成</div>
<div class="sd" style="left:319.5px"></div>
<div class="st" style="left:349.5px">时装加成</div>
<div class="sd" style="left:379.5px"></div>
<div class="st" style="left:409.5px">被动加成</div>
<div class="sd" style="left:439.5px"></div>
<div class="st" style="left:469.5px">主动加成</div>
<div class="abs" style="left:499.5px;top:-1px;width:61px;height:19.5px;background:#fff;border-left:1px solid #ababab;border-right:1px solid #ababab;border-bottom:2px solid #217346"></div>
<div class="st" style="left:530px;color:#217346">最终伤害</div>
<div class="abs" style="left:569px;top:0;width:24.5px;height:21px;overflow:hidden;font-size:10.2px;line-height:19px;color:#444;white-space:nowrap">加成计算</div>
<div class="abs" style="left:599.5px;top:2px;font-size:11px;line-height:15px;color:#217346;font-weight:bold;letter-spacing:0.5px">...</div>
<svg class="abs" style="left:618.5px;top:4px" width="14" height="14" viewBox="0 0 14 14"><circle cx="7" cy="7" r="6" fill="none" stroke="#7a7a7a" stroke-width="1"/><path d="M7 3.6v6.8M3.6 7h6.8" stroke="#555" stroke-width="1.2"/></svg>
<svg class="abs" style="left:647.5px;top:6.5px" width="2" height="9" viewBox="0 0 2 9"><path d="M1 0v9" stroke="#b0b0b0" stroke-width="1" stroke-dasharray="1 1.6"/></svg>
<div class="abs" style="left:661.5px;top:4.5px;width:11.5px;height:11.5px;background:#fff;border:1px solid #c8c8c8"></div>
<svg class="abs" style="left:665.5px;top:7.5px" width="3.5" height="6" viewBox="0 0 3.5 6"><path d="M3.5 0v6L0 3z" fill="#555"/></svg>
<div class="abs" style="left:672.5px;top:4.5px;width:142px;height:11.5px;background:#fff;border:1px solid #c8c8c8"></div>
<div class="abs" style="left:1052.3px;top:4.5px;width:11.2px;height:11.5px;background:#fff;border:1px solid #c8c8c8"></div>
<svg class="abs" style="left:1056.5px;top:7.5px" width="3.5" height="6" viewBox="0 0 3.5 6"><path d="M0 0v6L3.5 3z" fill="#555"/></svg>
</div>
<div id="status">
<div class="abs" style="left:6.5px;top:1.5px;font-size:9.6px;line-height:14px;color:#444">就绪</div>
<svg class="abs" style="left:40px;top:2.2px" width="12" height="12" viewBox="0 0 12 12"><rect x="1.6" y="2.6" width="9.4" height="8.6" fill="none" stroke="#666" stroke-width="1"/><path d="M3.4 6.4h6M3.4 8.6h6" stroke="#666" stroke-width="0.9"/><circle cx="2.6" cy="2.4" r="2" fill="#666"/><path d="M5.6 1.2h2M8.6 1.2h2" stroke="#666" stroke-width="1"/></svg>
<div class="abs" style="left:845.5px;top:0;width:29.5px;height:17.5px;background:#c8c8c8"></div>
<svg class="abs" style="left:854.2px;top:3.3px" width="11" height="10" viewBox="0 0 11 10"><path d="M0.5 0.5h10v9H0.5zM0.5 3.5h10M0.5 6.5h10M3.8 0.5v9M7.2 0.5v9" fill="none" stroke="#555" stroke-width="0.9"/></svg>
<svg class="abs" style="left:885px;top:3.3px" width="11" height="10" viewBox="0 0 11 10"><rect x="0.5" y="0.5" width="10" height="9" fill="none" stroke="#555" stroke-width="0.9"/><rect x="3" y="2.6" width="5" height="4.8" fill="none" stroke="#555" stroke-width="0.9"/><path d="M4.4 4.2h2.2M4.4 5.8h2.2" stroke="#555" stroke-width="0.7"/></svg>
<svg class="abs" style="left:914.8px;top:3.3px" width="11" height="10" viewBox="0 0 11 10"><rect x="0.5" y="0.5" width="10" height="9" fill="none" stroke="#555" stroke-width="0.9"/><path d="M3.4 0.5v5h4.4v-5M0.5 5.5h3M7.8 5.5h2.7" fill="none" stroke="#555" stroke-width="0.9"/></svg>
<div class="abs" style="left:939.6px;top:7.7px;width:4.6px;height:1.3px;background:#444"></div>
<div class="abs" style="left:947.8px;top:8px;width:79px;height:1px;background:#8a8a8a"></div>
<div class="abs" style="left:988.4px;top:3.9px;width:3.2px;height:8.6px;background:#555"></div>
<div class="abs" style="left:1029.3px;top:7.7px;width:6.4px;height:1.3px;background:#444"></div><div class="abs" style="left:1031.9px;top:5.1px;width:1.3px;height:6.4px;background:#444"></div>
<div class="abs" style="left:1048.5px;top:1.2px;font-size:9.8px;line-height:14px;color:#444">120%</div>
</div>
<div class="abs" style="left:872.5px;top:512.3px;font-size:15.4px;line-height:20px;color:rgba(120,120,120,0.42);white-space:nowrap;z-index:5">激活 <span id="w1" style="font-size:16.7px;letter-spacing:0.2px;margin-left:2.6px">Windows</span></div>
<div class="abs" style="left:872.5px;top:533px;font-size:10.4px;line-height:14px;color:rgba(120,120,120,0.42);white-space:nowrap;z-index:5;font-family:'Noto Sans CJK SC',sans-serif">转到“设置”以激活 <span id="w2" style="font-family:'Liberation Sans',sans-serif;font-size:12px;letter-spacing:0.15px">Windows</span>。</div>
<div id="taskbar">
<div class="abs" style="left:159.9px;top:0;width:38.6px;height:31.6px;background:#37393d"></div>
<div class="abs" style="left:198.5px;top:0;width:37.5px;height:31.6px;background:#c0601c"></div>
<div class="abs" style="left:124px;top:29.0px;width:31.80000000000001px;height:3px;background:#8bb6e3"></div>
<div class="abs" style="left:159.9px;top:29.0px;width:38.599999999999994px;height:3px;background:#8bb6e3"></div>
<div class="abs" style="left:198.5px;top:29.0px;width:37.5px;height:3px;background:#f57c12"></div>
<div class="abs" style="left:239.8px;top:29.0px;width:32.099999999999966px;height:3px;background:#8bb6e3"></div>
<div class="abs" style="left:279px;top:29.0px;width:31.80000000000001px;height:3px;background:#8bb6e3"></div>
<svg class="abs" style="left:12px;top:9.6px" width="14" height="13" viewBox="0 0 14 13"><path d="M0.2 1.9 5.6 1.1v5H0.2zM6.4 1 13.8 0v6.1H6.4zM0.2 6.9h5.4v5L0.2 11.1zM6.4 6.9h7.4V13L6.4 12z" fill="#fff"/></svg>
<svg class="abs" style="left:49.5px;top:9.6px" width="14.5" height="12" viewBox="0 0 14.5 12"><rect x="2.6" y="2.8" width="7" height="6.4" fill="none" stroke="#e8e8e8" stroke-width="1.1"/><path d="M0.6 0.6v2M0.6 9.4v2M0.3 0.6h9.6M0.3 11.4h9.6" stroke="#e8e8e8" stroke-width="1.1"/><path d="M12.4 3v8.6" stroke="#e8e8e8" stroke-width="1.4"/><rect x="11.7" y="0.2" width="1.4" height="1.5" fill="#e8e8e8"/></svg>
<svg class="abs" style="left:88px;top:7.4px" width="17.5" height="17" viewBox="0 0 17.5 17"><g fill="#fff"><path d="M8.3 8.1C8.6 5 7.6 1.6 4.8 0.9 2.2 0.3 0.2 2.6 0.8 5c0.6 2.6 4 3.4 7.5 3.1z"/><path d="M9.1 8.1c3.1 0.3 6.5-0.7 7.2-3.5 0.6-2.6-1.7-4.6-4.1-4-2.6 0.6-3.4 4-3.1 7.5z"/><path d="M9.1 8.9c-0.3 3.1 0.7 6.5 3.5 7.2 2.6 0.6 4.6-1.7 4-4.1-0.6-2.6-4-3.4-7.5-3.1z"/><path d="M8.3 8.9C5.200000000000001 8.6 1.8 9.6 1.1 12.4c-0.6 2.6 1.7 4.6 4.1 4 2.6-0.6 3.4-4 3.1-7.5z"/></g></svg>
<svg class="abs" style="left:130px;top:6.1px" width="20" height="20" viewBox="0 0 20 20"><defs><radialGradient id="g360" cx="0.4" cy="0.35" r="0.7"><stop offset="0" stop-color="#a4e05a"/><stop offset="1" stop-color="#4cb22c"/></radialGradient></defs><circle cx="9.8" cy="9.6" r="8" fill="url(#g360)"/><path d="M2.2 15.4C0.8 17.4 1.6 18.4 4 17.200000000000003" fill="none" stroke="#6cc63c" stroke-width="1"/><path d="M14 3.2c3-2 4.600000000000001-1.2 3.6 1.4" fill="none" stroke="#6cc63c" stroke-width="1"/><path d="M5.4 9.8h8.8c0-2.4-1.8-4.2-4.2-4.2S5.6 7.4 5.4 9.8c-0.2 2.6 1.8 4.6 4.6 4.6 1.6 0 3-0.6 3.8-1.8" fill="none" stroke="#fff" stroke-width="2"/></svg>
<svg class="abs" style="left:168.5px;top:8.1px" width="20" height="15.5" viewBox="0 0 20 15.5"><path d="M0.4 1.8 11 0.2v15.2L0.4 13.8z" fill="#1e7145"/><rect x="11" y="1.6" width="8.2" height="12.4" fill="#fff" stroke="#1e7145" stroke-width="0.9"/><path d="M11 4.6h8.2M11 7.6h8.2M11 10.6h8.2M15.2 1.6v12.4" stroke="#1e7145" stroke-width="0.7"/><path d="M3.4 4.6l4.4 6.4M7.8 4.6 3.4 11" stroke="#fff" stroke-width="1.5"/></svg>
<svg class="abs" style="left:207.5px;top:5.9px" width="20" height="20" viewBox="0 0 20 20"><defs><clipPath id="gc"><circle cx="10" cy="9.8" r="9.4"/></clipPath></defs><g clip-path="url(#gc)"><rect width="20" height="20" fill="#c9c2a4"/><rect x="0" y="0" width="20" height="6" fill="#a9c7c1"/><path d="M0 8 4 4l3 4 3-5 4 5 3-3 3 4v5H0z" fill="#b8a98c"/><rect x="3" y="6" width="5" height="6" fill="#d9a3a9"/><rect x="10" y="5" width="5" height="7" fill="#c4837a"/><rect x="6.4" y="8" width="6" height="5" fill="#e8dfc8"/><path d="M0 13c4-1.6 7 1 10 0s6-1.600000000000001 10 0v7H0z" fill="#6fae7a"/><path d="M0 16.4c4-1 8 1 20 0V20H0z" fill="#a8cf9a"/></g></svg>
<svg class="abs" style="left:248.5px;top:6.4px" width="15.5" height="19.5" viewBox="0 0 15.5 19.5"><defs><linearGradient id="gd" x1="0.3" y1="0" x2="0.6" y2="1"><stop offset="0" stop-color="#ff9a2e"/><stop offset="0.38" stop-color="#f0527e"/><stop offset="0.62" stop-color="#b06be0"/><stop offset="1" stop-color="#1e9cf5"/></linearGradient></defs><path d="M8.2 0.4c1.2 3.4 6.8 7.2 6.8 12.200000000000001 0 3.8-3.2 6.6-7.2 6.6S0.6 16.4 0.6 12.6C0.6 8.2 5.8 5 8.2 0.4z" fill="url(#gd)"/></svg>
<svg class="abs" style="left:286.5px;top:8.6px" width="17" height="14.5" viewBox="0 0 17 14.5"><path d="M0.4 1.2c0-0.5 0.3-0.8 0.8-0.8h5l1.4 1.6h8.2c0.5 0 0.8 0.3 0.8 0.8v10.6H0.4z" fill="#f7d56e"/><path d="M0.4 3.6h16.2v2H0.4z" fill="#f2c74e"/><path d="M3 8h11v5.6h-2.6v-2.6H5.600000000000001v2.6H3z" fill="#3f9cea"/><rect x="0.4" y="13" width="16.2" height="1.2" fill="#e3b73f"/></svg>
<svg class="abs" style="left:748px;top:9.2px" width="13" height="13" viewBox="0 0 13 13"><rect x="0.2" y="0.2" width="12.6" height="12.6" rx="2.2" fill="#f4f8fd"/><circle cx="4" cy="8" r="2" fill="none" stroke="#3a94f0" stroke-width="1.5"/><circle cx="9" cy="8" r="2" fill="none" stroke="#3a94f0" stroke-width="1.5"/><circle cx="6.5" cy="4.6" r="2" fill="none" stroke="#e86a8e" stroke-width="1.5"/></svg>
<svg class="abs" style="left:766px;top:8.6px" width="15" height="14" viewBox="0 0 15 14"><circle cx="6.6" cy="6.4" r="5.8" fill="#8d9bb8"/><circle cx="6.6" cy="6.4" r="4.2" fill="#dfe5f0"/><path d="M6.6 3.2v3.4l2.4 1.4" stroke="#44506a" stroke-width="1" fill="none"/><rect x="8.6" y="8" width="5.2" height="5.2" rx="0.8" fill="#e04a3a"/><rect x="10" y="9.4" width="2.4" height="2.4" fill="#fff"/></svg>
<svg class="abs" style="left:786.5px;top:9.1px" width="12" height="14" viewBox="0 0 12 14"><ellipse cx="6" cy="4" rx="3" ry="3.4" fill="#222"/><ellipse cx="6" cy="9" rx="4.6" ry="4" fill="#222"/><ellipse cx="6" cy="9.6" rx="3" ry="3" fill="#fff"/><path d="M1.6 6.4c2.6 1.4 6.2 1.4 8.8 0l0.4 1.8c-3 1.4-6.6 1.4-9.6 0z" fill="#e8352a"/><circle cx="5" cy="3.4" r="0.8" fill="#fff"/><circle cx="7" cy="3.4" r="0.8" fill="#fff"/><ellipse cx="6" cy="5.4" rx="1.6" ry="0.7" fill="#f5a623"/><ellipse cx="3.4" cy="13" rx="2" ry="0.8" fill="#f5a623"/><ellipse cx="8.6" cy="13" rx="2" ry="0.8" fill="#f5a623"/></svg>
<svg class="abs" style="left:804.5px;top:9.4px" width="14" height="12" viewBox="0 0 14 12"><path d="M0.8 4h2.4L6.4 1v10L3.2 8H0.8z" fill="none" stroke="#f0f0f0" stroke-width="1"/><path d="M8 4c1 1.200000000000001 1 2.8 0 4" fill="none" stroke="#f0f0f0" stroke-width="1"/><path d="M9.8 2.4c1.8 2 1.8 5.2 0 7.2" fill="none" stroke="#cfcfcf" stroke-width="1"/><path d="M11.6 1c2.4 2.8 2.4 7.2 0 10" fill="none" stroke="#8a8a8a" stroke-width="1"/></svg>
<svg class="abs" style="left:823px;top:8.4px" width="14" height="14" viewBox="0 0 14 14"><circle cx="7" cy="7" r="6.6" fill="#e6dc1e"/><circle cx="7" cy="7" r="6.6" fill="none" stroke="#c9b80e" stroke-width="0.8"/><path d="M7 3.4v7.2M3.4 7h7.2" stroke="#2f9e2f" stroke-width="2.2"/></svg>
<svg class="abs" style="left:842.5px;top:8.8px" width="13" height="13" viewBox="0 0 13 13"><circle cx="6.4" cy="6.5" r="6" fill="#6cc63c"/><path d="M3.4 6.6h6c0-1.800000000000001-1.200000000000001-3-3-3s-3 1.2-3 3 1.4 3.200000000000001 3.2 3.200000000000001c1.200000000000001 0 2-0.4 2.6-1.200000000000001" fill="none" stroke="#fff" stroke-width="1.5"/></svg>
<svg class="abs" style="left:864px;top:10.1px" width="11" height="11" viewBox="0 0 11 11"><path d="M0.6 10.4A9.8 9.8 0 0 1 10.4 0.6" fill="none" stroke="#e8e8e8" stroke-width="1.1"/><path d="M3.4 10.4a7 7 0 0 1 7-7" fill="none" stroke="#e8e8e8" stroke-width="1.1"/><path d="M6.2 10.4a4.2 4.2 0 0 1 4.2-4.2" fill="none" stroke="#e8e8e8" stroke-width="1.1"/><circle cx="9.6" cy="9.6" r="1.2" fill="#e8e8e8"/></svg>
<svg class="abs" style="left:880.5px;top:10.6px" width="14" height="10" viewBox="0 0 14 10"><rect x="2.6" y="2.6" width="10.2" height="6" fill="none" stroke="#f0f0f0" stroke-width="1.1"/><rect x="3.8" y="3.8" width="6" height="3.6" fill="#f0f0f0"/><path d="M1.2 0.4v2.2M3 0.4v2.2M0.4 2.6h3.4v2H0.4z" fill="#f0f0f0" stroke="#f0f0f0" stroke-width="0.8"/><path d="M13.4 4.4v2.4" stroke="#f0f0f0" stroke-width="1"/></svg>
<svg class="abs" style="left:899.5px;top:9.6px" width="14" height="12.5" viewBox="0 0 14 12.5"><rect x="0.6" y="1.2" width="11.8" height="10" fill="none" stroke="#f0f0f0" stroke-width="1.2"/><path d="M12.4 0.2v12" stroke="#f0f0f0" stroke-width="1"/><circle cx="6.4" cy="4.8" r="1.6" fill="#f0f0f0"/><path d="M3.6 9.6c0.4-2 5.2-2 5.6 0z" fill="#f0f0f0"/><rect x="7.6" y="6" width="5.4" height="6" fill="#e0352b"/><path d="M10.3 7v2.6M10.3 10.4v0.9" stroke="#fff" stroke-width="1"/></svg>
<div class="abs" style="left:918.5px;top:8.1px;font-size:11.4px;line-height:14px;color:#fff;font-weight:500">中</div>
<svg class="abs" style="left:940px;top:9.1px" width="14" height="14" viewBox="0 0 14 14"><g transform="rotate(-10 7 7)"><rect x="1" y="1" width="12" height="12" rx="1.6" fill="#f0501e"/><path d="M10 4.2C9 3.4 7.8 3.2 6.6 3.2 5.2 3.4 4.4 4 4.4 5c0.2 0.8 1 1.2 2.4 1.400000000000001 1.6 0.2 2.6 0.6 2.800000000000001 1.600000000000001C9.6 9 8.8 9.8 7.2 10c-1.200000000000001 0.2-2.4-0.2-3.400000000000001-0.8" fill="none" stroke="#fff" stroke-width="1.8"/></g></svg>
<svg class="abs" style="left:965px;top:7.2px" width="18.5" height="18.5" viewBox="0 0 18.5 18.5"><circle cx="9.2" cy="9.2" r="8.8" fill="#1fc65c"/><path d="M2.6 9.2a6.6 6.6 0 0 1 13.2 0" fill="none" stroke="#fff" stroke-width="1.1"/><path d="M2.6 9.2a6.6 6.6 0 0 0 13.2 0" fill="none" stroke="#0e7d39" stroke-width="1.1"/><text x="9.2" y="12.4" text-anchor="middle" font-family="Liberation Sans, sans-serif" font-size="8.6" fill="#fff">47</text></svg>
<div class="abs" style="left:992px;top:1.6px;font-size:10.4px;line-height:14px;color:#e6e6e6;white-space:nowrap">22:41 周六</div>
<div class="abs" style="left:989px;top:14.9px;font-size:10.4px;line-height:14px;color:#e6e6e6;white-space:nowrap">2021/11/13</div>
<div class="abs" style="left:1039.2px;top:1.7px;width:3.6px;height:3.6px;border-radius:2px;background:#e81123"></div>
<svg class="abs" style="left:1054px;top:9.6px" width="12.5" height="13" viewBox="0 0 12.5 13"><path d="M0.8 0.8h10.8v9.6H5.2L2.6 12.4v-2H0.8z" fill="none" stroke="#f0f0f0" stroke-width="1.1"/><path d="M3 3.4h6.4M3 5.6h6.4M3 7.8h4" stroke="#f0f0f0" stroke-width="0.9"/></svg>
<div class="abs" style="left:1076.5px;top:3px;width:1px;height:26px;background:#555"></div>
</div>
</body>
</html>
